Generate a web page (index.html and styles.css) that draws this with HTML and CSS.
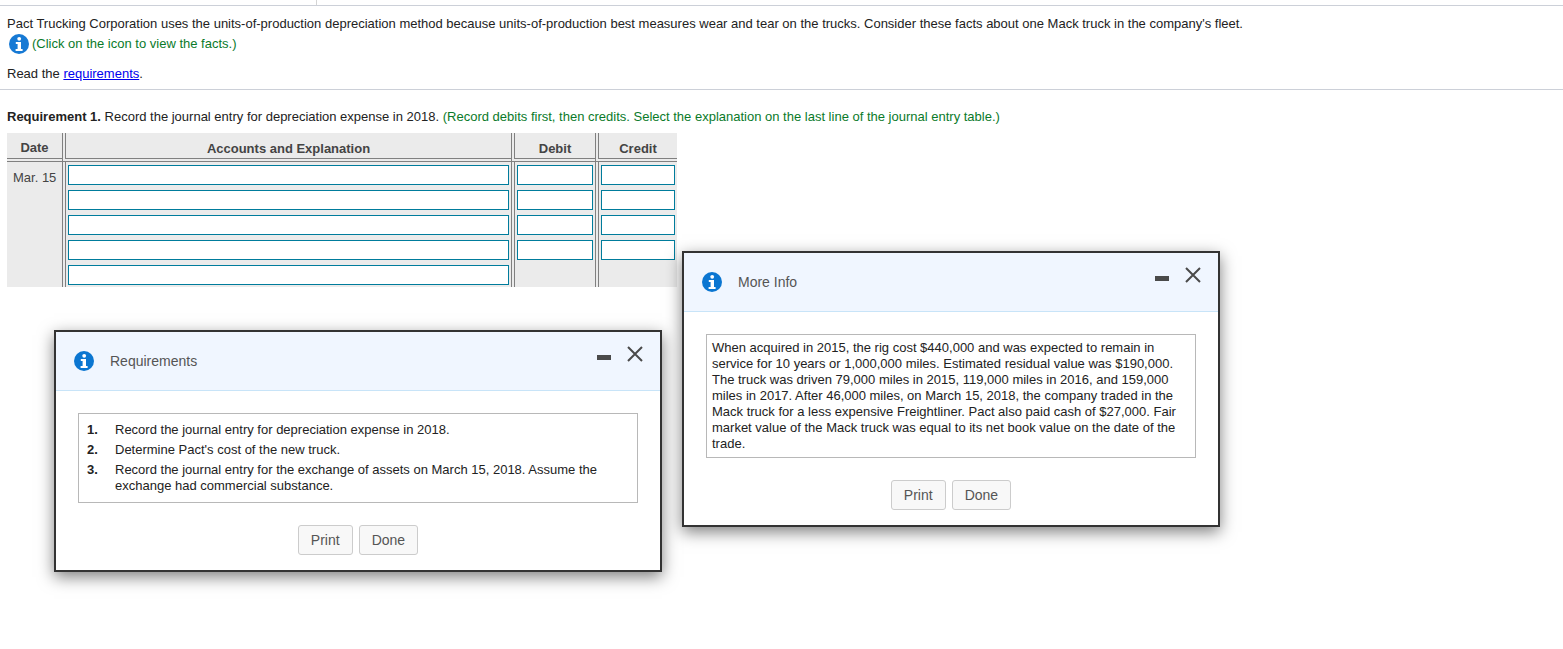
FILE: index.html
```html
<!DOCTYPE html>
<html lang="en">

<head>
    <meta charset="UTF-8">
    <title>Document</title>
    <link rel="stylesheet" href="styles.css">
</head>

<body>
    <div class="topbar"><span class="tick"></span></div>

    <div class="intro">
        <p class="line">Pact Trucking Corporation uses the units-of-production depreciation method because units-of-production best measures wear and tear on the trucks. Consider these facts about one Mack truck in the company's fleet.</p>
        <p class="line facts">
            <svg class="info big" viewBox="0 0 20 20"><circle cx="10" cy="10" r="10" fill="#1679d4"/><circle cx="10.2" cy="4.8" r="1.9" fill="#fff"/><path d="M6.8 8h5.2v7h1.6v2H6.6v-2h2v-5H6.8z" fill="#fff"/></svg>
            <span class="green">(Click on the icon to view the facts.)</span>
        </p>
        <p class="line read">Read the <a href="javascript:;">requirements</a>.</p>
    </div>

    <div class="req">
        <p><b>Requirement 1.</b> Record the journal entry for depreciation expense in 2018. <span class="green">(Record debits first, then credits. Select the explanation on the last line of the journal entry table.)</span></p>
    </div>

    <div class="journal">
        <div class="head">Date</div>
        <div class="head">Accounts and Explanation</div>
        <div class="head">Debit</div>
        <div class="head">Credit</div>

        <div class="cell date">Mar. 15</div>
        <div class="cell inputs">
            <input type="text"><input type="text"><input type="text"><input type="text"><input type="text">
        </div>
        <div class="cell inputs">
            <input type="text"><input type="text"><input type="text"><input type="text">
        </div>
        <div class="cell inputs">
            <input type="text"><input type="text"><input type="text"><input type="text">
        </div>
    </div>

    <!-- 需求弹窗 -->
    <div class="win win-req">
        <div class="win-head">
            <svg class="info" viewBox="0 0 20 20"><circle cx="10" cy="10" r="10" fill="#0b76d1"/><circle cx="10.2" cy="4.8" r="1.9" fill="#fff"/><path d="M6.8 8h5.2v7h1.6v2H6.6v-2h2v-5H6.8z" fill="#fff"/></svg>
            <span class="win-title">Requirements</span>
            <svg class="win-ctrl" viewBox="0 0 46 24"><rect x="0" y="9" width="14" height="5" fill="#4a4a4a"/><path d="M31 1l14 14M45 1L31 15" stroke="#4a4a4a" stroke-width="2" fill="none"/></svg>
        </div>
        <div class="win-body">
            <ol class="box">
                <li><b>1.</b><span>Record the journal entry for depreciation expense in 2018.</span></li>
                <li><b>2.</b><span>Determine Pact's cost of the new truck.</span></li>
                <li><b>3.</b><span>Record the journal entry for the exchange of assets on March 15, 2018. Assume the exchange had commercial substance.</span></li>
            </ol>
            <div class="btns">
                <a href="javascript:;" class="btn">Print</a>
                <a href="javascript:;" class="btn">Done</a>
            </div>
        </div>
    </div>

    <!-- 事实弹窗 -->
    <div class="win win-info">
        <div class="win-head">
            <svg class="info" viewBox="0 0 20 20"><circle cx="10" cy="10" r="10" fill="#0b76d1"/><circle cx="10.2" cy="4.8" r="1.9" fill="#fff"/><path d="M6.8 8h5.2v7h1.6v2H6.6v-2h2v-5H6.8z" fill="#fff"/></svg>
            <span class="win-title">More Info</span>
            <svg class="win-ctrl" viewBox="0 0 46 24"><rect x="0" y="9" width="14" height="5" fill="#4a4a4a"/><path d="M31 1l14 14M45 1L31 15" stroke="#4a4a4a" stroke-width="2" fill="none"/></svg>
        </div>
        <div class="win-body">
            <div class="box text">When acquired in 2015, the rig cost $440,000 and was expected to remain in service for 10 years or 1,000,000 miles. Estimated residual value was $190,000. The truck was driven 79,000 miles in 2015, 119,000 miles in 2016, and 159,000 miles in 2017. After 46,000 miles, on March 15, 2018, the company traded in the Mack truck for a less expensive Freightliner. Pact also paid cash of $27,000. Fair market value of the Mack truck was equal to its net book value on the date of the trade.</div>
            <div class="btns">
                <a href="javascript:;" class="btn">Print</a>
                <a href="javascript:;" class="btn">Done</a>
            </div>
        </div>
    </div>
</body>

</html>
```

FILE: styles.css
```css
* {
    margin: 0;
    padding: 0;
    box-sizing: border-box;
}

body {
    font-family: "Liberation Sans", Arial, sans-serif;
    font-size: 13px;
    color: #222;
    background: #fff;
    height: 649px;
    overflow: hidden;
    position: relative;
}

.topbar {
    height: 6px;
    border-bottom: 1px solid #ccd0d8;
    position: relative;
}

.tick {
    position: absolute;
    left: 316px;
    top: 0;
    width: 1px;
    height: 5px;
    background: #d5d5d5;
}

.intro {
    padding: 10px 0 0 7px;
    height: 84px;
    border-bottom: 1px solid #ccd0d8;
}

.line {
    line-height: 16px;
}

.green {
    color: #0a7a2a;
}

.facts {
    display: flex;
    align-items: center;
    height: 20px;
    margin-top: 2px;
    padding-left: 2px;
    gap: 3px;
}

.read {
    margin-top: 12px;
}

.read a {
    color: #00e;
}

.req {
    padding: 19px 0 0 7px;
    line-height: 16px;
}

.journal {
    display: grid;
    grid-template-columns: 55px 449px 84px 82px;
    grid-template-rows: 29px 125px;
    width: 670px;
    margin: 8px 0 0 7px;
    background: #ebebeb;
}

.head,
.cell {
    border-left: 4px double #808080;
}

.head:first-child,
.date {
    border-left: 0;
}

.head {
    border-bottom: 4px double #808080;
    font-weight: bold;
    color: #444;
    text-align: center;
    line-height: 31px;
}

.head:first-child {
    line-height: 29px;
}

.date {
    color: #444;
    padding: 8px 0 0 6px;
    line-height: 16px;
}

.inputs {
    display: flex;
    flex-direction: column;
    align-items: stretch;
    gap: 5px;
    padding: 3px 2px 0;
}

.inputs input {
    display: block;
    width: 100%;
    height: 20px;
    border: 1px solid #007c9c;
    background: #fff;
}

.win {
    position: absolute;
    background: #fff;
    border: 2px solid #333;
    box-shadow: 0 5px 15px rgba(0, 0, 0, 0.5);
}

.win-req {
    left: 54px;
    top: 330px;
    width: 608px;
    height: 242px;
}

.win-info {
    left: 682px;
    top: 251px;
    width: 538px;
    height: 276px;
}

.win-head {
    display: flex;
    align-items: center;
    height: 59px;
    padding: 0 18px;
    background: #f0f6ff;
    border-bottom: 1px solid #c8e4f8;
    position: relative;
}

.info {
    width: 20px;
    height: 20px;
    flex: none;
}

.win-title {
    margin-left: 16px;
    font-size: 14px;
    color: #555;
}

.win-ctrl {
    position: absolute;
    right: 17px;
    top: 14px;
    width: 46px;
    height: 24px;
}

.win-body {
    padding: 22px 22px 0;
}

.box {
    border: 1px solid #b8b8b8;
    list-style: none;
}

ol.box {
    padding: 8px 8px 8px;
}

ol.box li {
    display: flex;
    line-height: 16px;
    margin-bottom: 4px;
}

ol.box li:last-child {
    margin-bottom: 0;
}

ol.box b {
    width: 28px;
    flex: none;
}

.box.text {
    padding: 5px;
    line-height: 16px;
}

.btns {
    display: flex;
    justify-content: center;
    gap: 6px;
    margin-top: 22px;
}

.btn {
    display: block;
    height: 30px;
    line-height: 28px;
    padding: 0 12px;
    font-size: 14px;
    color: #555;
    text-decoration: none;
    background: #f8f8f8;
    border: 1px solid #ccc;
    border-radius: 3px;
}
```
